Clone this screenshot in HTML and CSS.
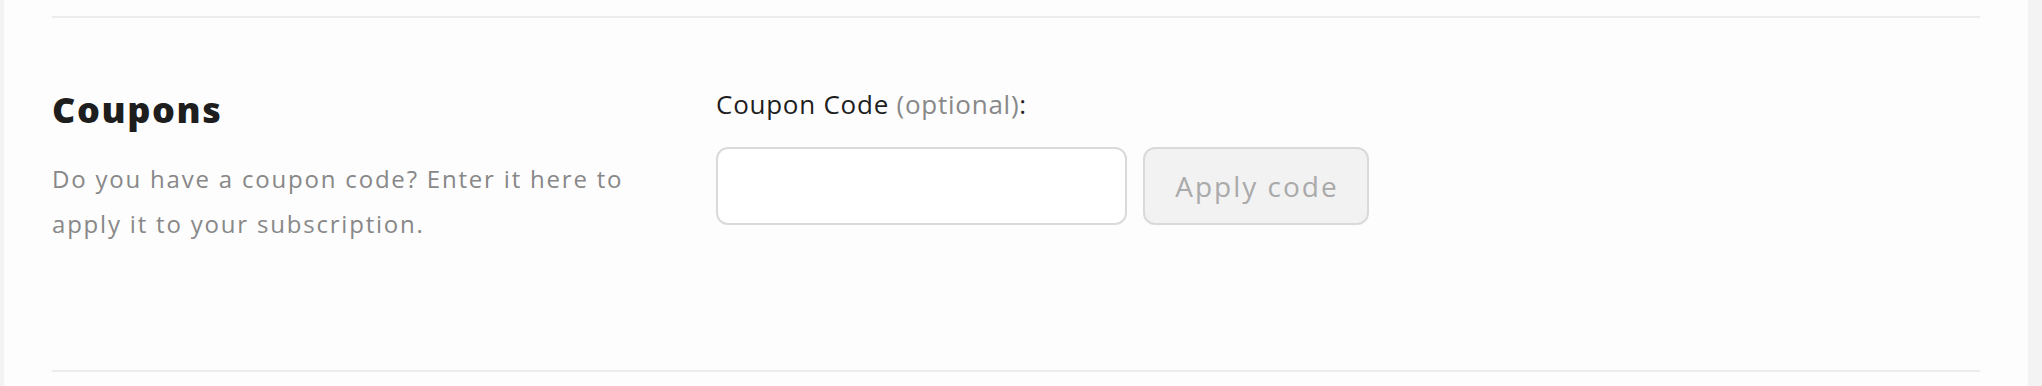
FILE: index.html
```html
<!DOCTYPE html>
<html lang="en">
<head>
<meta charset="utf-8">
<title>Coupons</title>
<link rel="stylesheet" href="styles.css">
</head>
<body>
  <main class="panel">
    <section class="coupon-section">
      <div class="intro">
        <h2 class="title">Coupons</h2>
        <p class="desc">Do you have a coupon code? Enter it here to apply it to your subscription.</p>
      </div>
      <div class="form">
        <label class="label" for="coupon">Coupon Code <span class="optional">(optional)</span>:</label>
        <div class="row">
          <input class="input" id="coupon" type="text">
          <button class="btn" type="button" disabled>Apply code</button>
        </div>
      </div>
    </section>
  </main>
</body>
</html>
```
FILE: styles.css
```css
html, body {
  margin: 0;
  padding: 0;
}
body {
  background: #f3f3f3;
  font-family: "Open Sans", "Liberation Sans", sans-serif;
  height: 386px;
  overflow: hidden;
}
.panel {
  margin: 0 14px 0 4px;
  background: #fdfdfd;
  height: 386px;
  padding: 16px 48px 0;
  box-sizing: border-box;
}
.coupon-section {
  border-top: 2px solid #ececec;
  border-bottom: 2px solid #ececec;
  padding: 70px 0 124px;
  display: grid;
  grid-template-columns: 640px 1fr;
  column-gap: 24px;
}
.title {
  margin: 0;
  font-size: 36px;
  line-height: 44px;
  font-weight: 800;
  color: #1e1e1e;
  letter-spacing: 1.6px;
}
.desc {
  margin: 24px 0 0;
  font-size: 24px;
  line-height: 45px;
  color: #888888;
  letter-spacing: 1.8px;
  max-width: 600px;
}
.form {
  padding-top: 0;
}
.label {
  display: block;
  font-size: 26px;
  line-height: 32px;
  font-weight: 500;
  color: #1e1e1e;
  letter-spacing: 0.75px;
}
.optional {
  color: #888888;
  font-weight: 400;
}
.row {
  display: flex;
  gap: 16px;
  margin-top: 27px;
}
.input {
  width: 411px;
  height: 78px;
  box-sizing: border-box;
  border: 2px solid #dadada;
  border-radius: 12px;
  background: #ffffff;
  margin: 0;
  padding: 0 16px;
  font: inherit;
}
.btn {
  width: 226px;
  height: 78px;
  box-sizing: border-box;
  border: 2px solid #dadada;
  border-radius: 12px;
  background: #f2f2f2;
  color: #aaaaaa;
  font-family: inherit;
  font-size: 28px;
  letter-spacing: 2px;
  margin: 0;
  padding: 0 0 0 2px;
}
```
